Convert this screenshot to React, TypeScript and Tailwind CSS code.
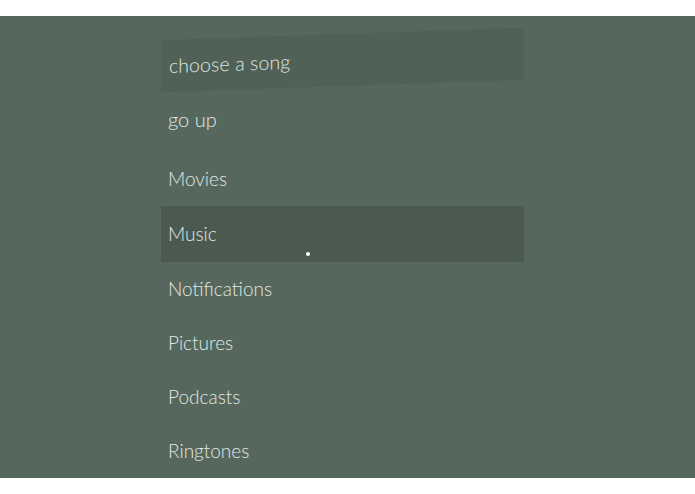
import React from "react";

const items = ["Movies", "Music", "Notifications", "Pictures", "Podcasts", "Ringtones"];

function rowClass(it: string) {
  if (it === "Music") return "relative h-[56px] bg-[#4b5a51] flex items-center pl-[7px]";
  if (it === "Movies") return "h-[53px] flex items-center pl-[7px]";
  return "h-[54px] flex items-center pl-[7px]";
}

export default function App() {
  return (
    <div className="w-[695px] h-[494px] bg-white" style={{ fontFamily: "Lato, 'Open Sans', sans-serif" }}>
      <div className="mt-4 h-[462px] bg-[#56675d] pt-[18px]">
        <div className="ml-[161px] w-[363px] flex flex-col">
          <div className="h-[52px] bg-[#506157] skew-y-[-2deg] flex items-center pl-[8px]">
            <span className="text-[19.5px] font-light text-[#e2e8e2] tracking-[0.1px]">choose a song</span>
          </div>
          <div className="mt-[6px] h-[54px] flex items-center pl-[7px]">
            <span className="text-[20px] font-light text-[#e2e8e2]">go up</span>
          </div>
          <div className="mt-[7px] flex flex-col">
            {items.map((it) => (
              <div key={it} className={rowClass(it)}>
                <span className="text-[19px] font-light text-[#e2e8e2]">{it}</span>
                {it === "Music" && (
                  <span className="absolute left-[145px] top-[46px] w-[4px] h-[4px] rounded-full bg-white" />
                )}
              </div>
            ))}
          </div>
        </div>
      </div>
    </div>
  );
}
